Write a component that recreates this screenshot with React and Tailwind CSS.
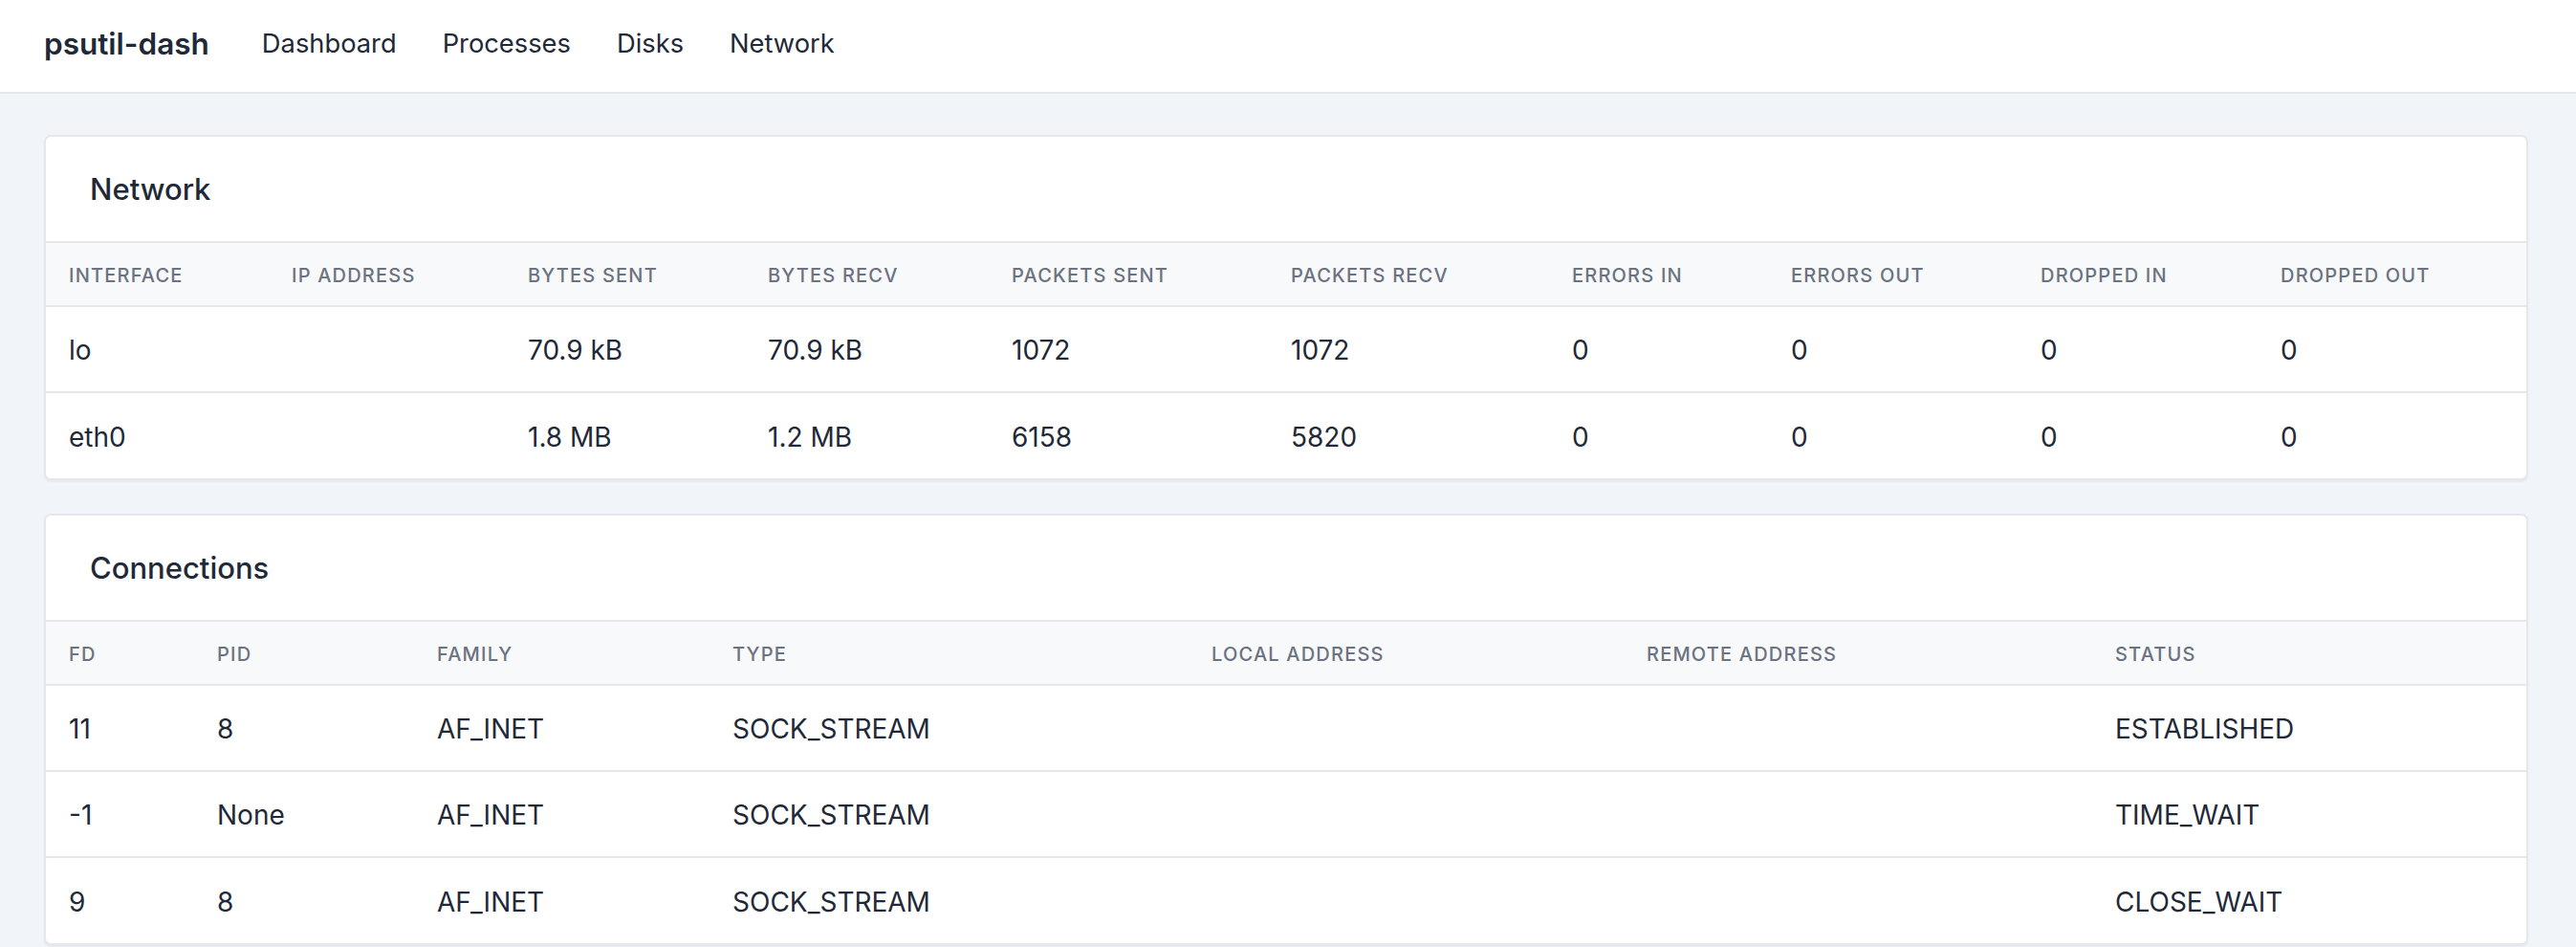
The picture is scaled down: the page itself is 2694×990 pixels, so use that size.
const networkCols = [
  { key: 'iface', label: 'Interface', w: 'w-[233px]' },
  { key: 'ip', label: 'IP Address', w: 'w-[247px]' },
  { key: 'sent', label: 'Bytes Sent', w: 'w-[251px]' },
  { key: 'recv', label: 'Bytes Recv', w: 'w-[255px]' },
  { key: 'psent', label: 'Packets Sent', w: 'w-[292px]' },
  { key: 'precv', label: 'Packets Recv', w: 'w-[294px]' },
  { key: 'errin', label: 'Errors In', w: 'w-[229px]' },
  { key: 'errout', label: 'Errors Out', w: 'w-[261px]' },
  { key: 'dropin', label: 'Dropped In', w: 'w-[251px]' },
  { key: 'dropout', label: 'Dropped Out', w: '' },
]

const networkRows = [
  { iface: 'lo', ip: '', sent: '70.9 kB', recv: '70.9 kB', psent: 1072, precv: 1072, errin: 0, errout: 0, dropin: 0, dropout: 0 },
  { iface: 'eth0', ip: '', sent: '1.8 MB', recv: '1.2 MB', psent: 6158, precv: 5820, errin: 0, errout: 0, dropin: 0, dropout: 0 },
]

const connCols = [
  { key: 'fd', label: 'FD', w: 'w-[155px]' },
  { key: 'pid', label: 'PID', w: 'w-[230px]' },
  { key: 'family', label: 'Family', w: 'w-[309px]' },
  { key: 'type', label: 'Type', w: 'w-[501px]' },
  { key: 'laddr', label: 'Local Address', w: 'w-[455px]' },
  { key: 'raddr', label: 'Remote Address', w: 'w-[490px]' },
  { key: 'status', label: 'Status', w: '' },
]

const connRows = [
  { fd: 11, pid: 8, family: 'AF_INET', type: 'SOCK_STREAM', laddr: '', raddr: '', status: 'ESTABLISHED' },
  { fd: -1, pid: 'None', family: 'AF_INET', type: 'SOCK_STREAM', laddr: '', raddr: '', status: 'TIME_WAIT' },
  { fd: 9, pid: 8, family: 'AF_INET', type: 'SOCK_STREAM', laddr: '', raddr: '', status: 'CLOSE_WAIT' },
]

function DataCard({ title, cols, rows }) {
  return (
    <section className="overflow-hidden rounded-[7px] border-2 border-[#e5e7eb] bg-white shadow-[0_2px_2px_rgba(0,0,0,0.05)]">
      <div className="flex h-[111px] items-center border-b-2 border-[#e5e7eb] px-[46px] pt-[2px]">
        <h2 className="text-[31px] font-medium text-[#1f2937]">{title}</h2>
      </div>
      <table className="w-full table-fixed border-collapse text-left">
        <colgroup>
          {cols.map(c => (
            <col key={c.key} className={c.w} />
          ))}
        </colgroup>
        <thead>
          <tr className="h-[66px] border-b-2 border-[#e5e7eb] bg-[#f8f9fb]">
            {cols.map(c => (
              <th key={c.key} className="pl-[24px] pt-[2px] text-[20px] font-medium uppercase tracking-[0.06em] text-[#6b7280]">
                {c.label}
              </th>
            ))}
          </tr>
        </thead>
        <tbody>
          {rows.map((r, i) => (
            <tr key={i} className="h-[90px] border-b-2 border-[#e5e7eb] last:border-b-0">
              {cols.map(c => (
                <td key={c.key} className="pl-[24px] pt-[2px] text-[28px] text-[#1f2937]">
                  {r[c.key]}
                </td>
              ))}
            </tr>
          ))}
        </tbody>
      </table>
    </section>
  )
}

export default function App() {
  return (
    <div className="min-h-screen bg-[#f1f4f9] font-['Inter',sans-serif]">
      <header className="flex h-[98px] items-center border-b-2 border-[#e5e7eb] bg-white pb-[4px] pl-[46px]">
        <span className="text-[31.5px] font-semibold text-[#1f2937]">psutil-dash</span>
        <nav className="ml-[55px] flex items-center gap-[48px] text-[27.3px] text-[#1f2937]">
          <a href="#">Dashboard</a>
          <a href="#">Processes</a>
          <a href="#">Disks</a>
          <a href="#">Network</a>
        </nav>
      </header>

      <main className="flex w-[2644px] flex-col gap-[35px] pb-10 pl-[46px] pt-[43px]">
        <DataCard title="Network" cols={networkCols} rows={networkRows} />
        <DataCard title="Connections" cols={connCols} rows={connRows} />
      </main>
    </div>
  )
}
